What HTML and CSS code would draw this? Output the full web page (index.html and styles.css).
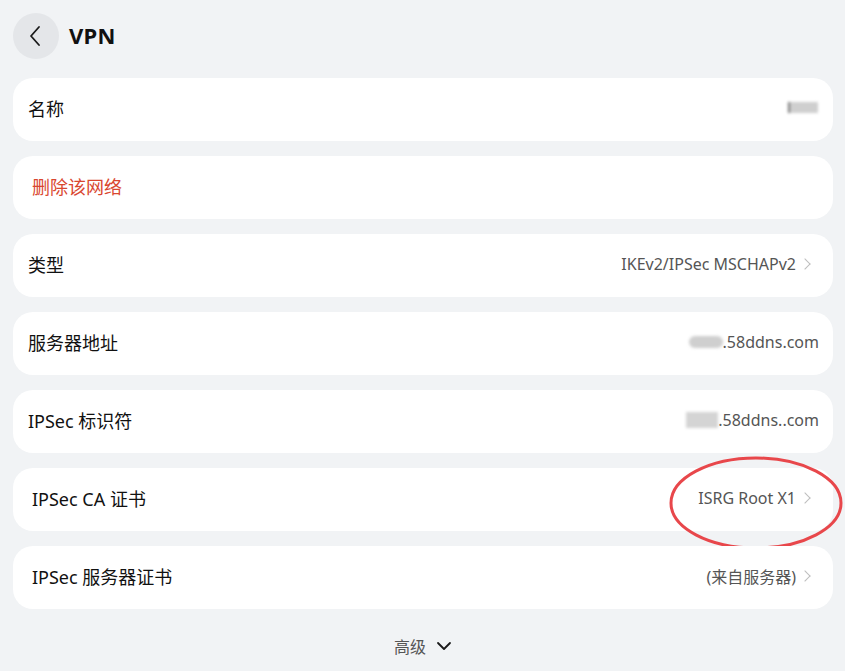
FILE: index.html
```html
<!DOCTYPE html>
<html lang="zh-CN">
<head>
  <meta charset="UTF-8">
  <title>VPN</title>
  <link rel="stylesheet" href="styles.css">
</head>
<body>
  <div class="topbar">
    <button class="back" type="button" aria-label="返回">
      <svg width="14" height="22" viewBox="0 0 14 22"><path d="M11 2 L3 11 L11 20" fill="none" stroke="#1a1a1a" stroke-width="1.8" stroke-linecap="round" stroke-linejoin="round"/></svg>
    </button>
    <h1>VPN</h1>
  </div>

  <div class="list">
    <div class="row">
      <span class="label">名称</span>
      <span class="value"><i class="mask mask-name"></i></span>
    </div>
    <div class="row">
      <span class="label danger">删除该网络</span>
    </div>
    <div class="row">
      <span class="label">类型</span>
      <span class="value">IKEv2/IPSec MSCHAPv2<b class="chev"></b></span>
    </div>
    <div class="row">
      <span class="label">服务器地址</span>
      <span class="value"><i class="mask mask-host"></i>.58ddns.com</span>
    </div>
    <div class="row">
      <span class="label">IPSec 标识符</span>
      <span class="value"><i class="mask mask-id"></i>.58ddns..com</span>
    </div>
    <div class="row row-inset">
      <span class="label">IPSec CA 证书</span>
      <span class="value">ISRG Root X1<b class="chev"></b></span>
      <svg class="ring" width="176" height="96" viewBox="0 0 176 96"><ellipse cx="88" cy="48" rx="85" ry="45" fill="none" stroke="#e8474b" stroke-width="3"/></svg>
    </div>
    <div class="row row-inset">
      <span class="label">IPSec 服务器证书</span>
      <span class="value">(来自服务器)<b class="chev"></b></span>
    </div>
  </div>

  <div class="more">
    <span>高级</span>
    <svg width="16" height="10" viewBox="0 0 16 10"><path d="M2 2 L8 8 L14 2" fill="none" stroke="#1a1a1a" stroke-width="1.8" stroke-linecap="round" stroke-linejoin="round"/></svg>
  </div>
</body>
</html>
```

FILE: styles.css
```css
body {
    margin: 0;
    background: #f1f3f5;
    color: #111;
    font-family: "Noto Sans", "Noto Sans CJK SC", sans-serif;
}

.topbar {
    display: flex;
    align-items: center;
    height: 71px;
    padding-left: 13px;
}

.back {
    width: 46px;
    height: 46px;
    border: 0;
    border-radius: 50%;
    background: #e4e6e9;
    display: flex;
    align-items: center;
    justify-content: center;
    padding: 0 3px 0 0;
    margin-right: 10px;
}

.topbar h1 {
    margin: 0 0 2px;
    font-size: 22px;
    font-weight: 700;
    letter-spacing: 0.3px;
}

.list {
    display: flex;
    flex-direction: column;
    gap: 15px;
    padding: 7px 12px 0 13px;
}

.row {
    position: relative;
    display: flex;
    align-items: center;
    justify-content: space-between;
    box-sizing: border-box;
    height: 63px;
    padding: 0 14px 4px 15px;
    background: #fff;
    border-radius: 20px;
}

.row-inset {
    padding-left: 19px;
}

.label {
    font-size: 18px;
}

.danger {
    color: #d9472f;
    padding-left: 4px;
}

.value {
    display: flex;
    align-items: center;
    font-size: 16px;
    color: #555;
}

.chev {
    width: 7px;
    height: 7px;
    margin: 0 10px 0 5px;
    border-top: 1.5px solid #bdbdbd;
    border-right: 1.5px solid #bdbdbd;
    transform: rotate(45deg);
}

.mask {
    display: inline-block;
    background: #cfcfcf;
    filter: blur(1.5px);
}

.mask-name {
    width: 28px;
    height: 11px;
    border-left: 2px solid #777;
    margin-right: 1px;
}

.mask-host {
    width: 34px;
    height: 12px;
    border-radius: 6px;
}

.mask-id {
    width: 32px;
    height: 16px;
    background: #d4d4d4;
}

.ring {
    position: absolute;
    right: -11px;
    top: -13px;
}

.more {
    display: flex;
    align-items: center;
    justify-content: center;
    gap: 10px;
    margin-top: 25px;
    margin-left: 1px;
    font-size: 16px;
    color: #555;
}
```
